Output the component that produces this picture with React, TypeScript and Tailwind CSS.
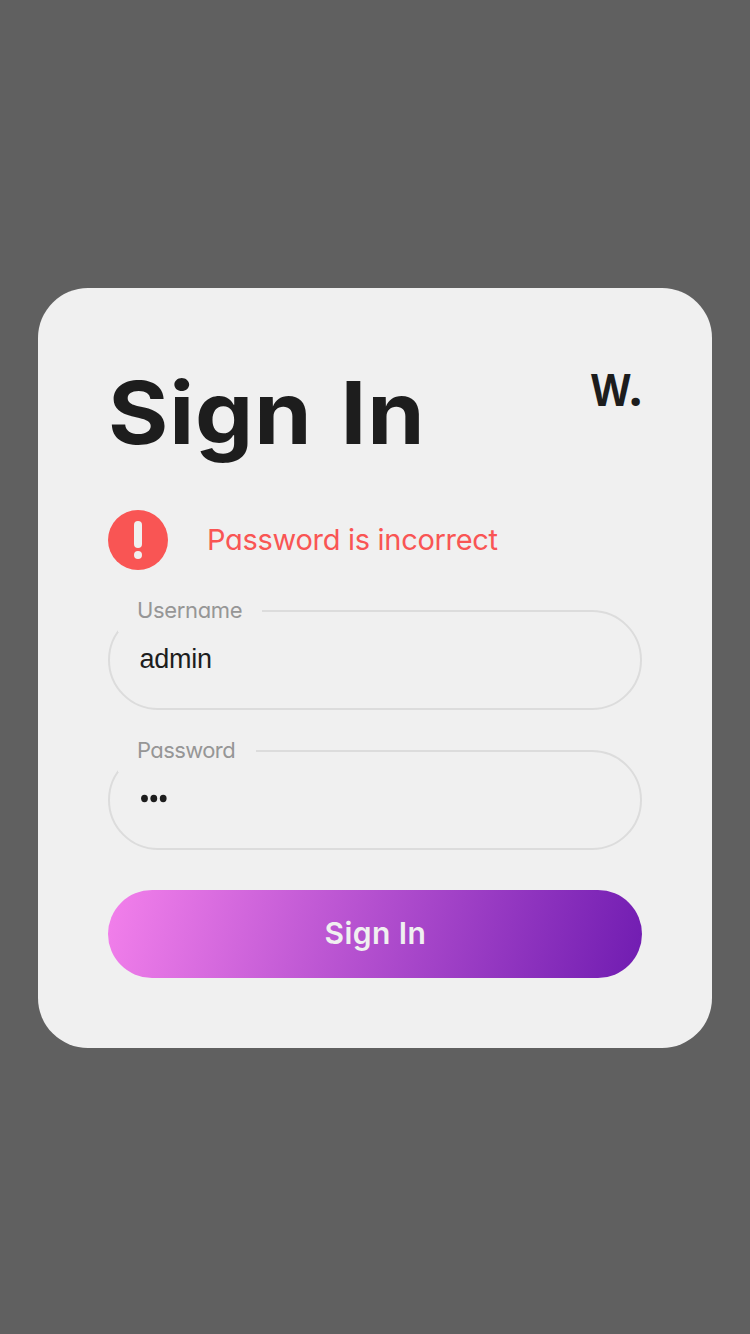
import React from "react";

const inter = "font-['Inter',sans-serif] [font-feature-settings:'cv11']";

function Field({
  label,
  width,
  tracking,
  children,
}: {
  label: string;
  width: string;
  tracking: string;
  children: React.ReactNode;
}) {
  return (
    <div className="relative h-[100px] w-full rounded-[50px] border-2 border-[#dcdcdc] pl-[29.5px] pt-[30px]">
      <div className={`absolute left-[8px] top-[-22px] flex h-[42px] items-start bg-[#f0f0f0] pl-[19px] ${width}`}>
        <span className={`${inter} whitespace-nowrap text-[22px] leading-[40px] text-[#969696] ${tracking}`}>
          {label}
        </span>
      </div>
      <div className="flex h-[34px] items-center font-['Liberation_Sans',sans-serif] text-[27px] tracking-[-0.25px] text-[#1d1d1d]">
        {children}
      </div>
    </div>
  );
}

export default function App() {
  return (
    <div className="flex h-[1334px] w-[750px] items-center justify-center bg-[#606060] pt-[2px]">
      <div className="flex h-[760px] w-[674px] flex-col rounded-[50px] bg-[#f0f0f0] px-[70px] pt-[70px]">
        <div className="flex h-[112px] items-start justify-between">
          <h1
            className={`${inter} origin-left scale-x-[1.06] whitespace-nowrap text-[87px] font-bold leading-[109px] tracking-[0.8px] text-[#1d1d1d] [word-spacing:5px]`}
          >
            Sign In
          </h1>
          <div className="origin-right scale-x-[0.91] whitespace-nowrap pt-[1px] font-['Open_Sans',sans-serif] text-[45px] font-bold leading-[60px] text-[#1d1d1d]">
            W<span className="ml-[-1px] font-extrabold">.</span>
          </div>
        </div>
        <div className="mt-[40px] flex h-[60px] items-center">
          <svg width="60" height="60" viewBox="0 0 60 60">
            <circle cx="30" cy="30" r="30" fill="#f95554" />
            <rect x="26" y="11" width="8" height="27" rx="4" fill="#f0f0f0" />
            <circle cx="30" cy="45" r="4" fill="#f0f0f0" />
          </svg>
          <p
            className={`${inter} ml-[39px] whitespace-nowrap text-[29px] font-[380] leading-[60px] tracking-[-0.3px] text-[#f95554]`}
          >
            Password is incorrect
          </p>
        </div>
        <div className="mt-[40px] flex flex-col gap-[40px]">
          <Field label="Username" width="w-[144px]" tracking="tracking-[-0.35px]">
            <span>admin</span>
          </Field>
          <Field label="Password" width="w-[138px]" tracking="tracking-[-0.6px]">
            <svg width="29" height="10" viewBox="0 0 29 10" fill="#1d1d1d">
              <ellipse cx="4.5" cy="4.5" rx="3.4" ry="3.7" />
              <ellipse cx="13.8" cy="4.5" rx="3.4" ry="3.7" />
              <ellipse cx="23.2" cy="4.5" rx="3.4" ry="3.7" />
            </svg>
          </Field>
        </div>
        <button
          className={`${inter} mt-[40px] h-[88px] w-full rounded-[44px] bg-[linear-gradient(105deg,#f380eb_0%,#701cb1_100%)] pb-[2px] pl-[1px] text-[30px] font-semibold tracking-[0.45px] text-[#f0f0f0]`}
        >
          Sign In
        </button>
      </div>
    </div>
  );
}
